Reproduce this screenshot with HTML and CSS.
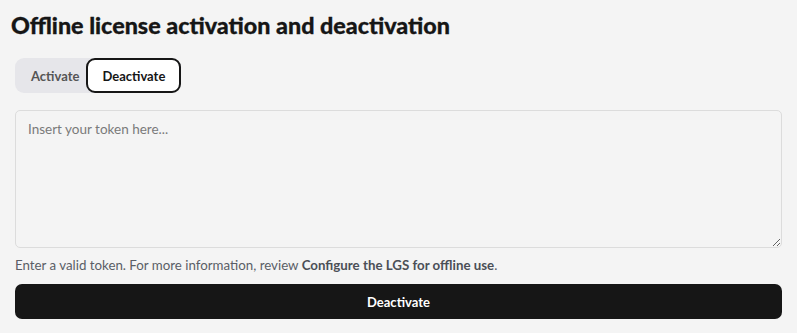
FILE: index.html
```html
<!DOCTYPE html>
<html>
<head>
<meta charset="utf-8">
<link rel="stylesheet" href="styles.css">
</head>
<body>
<main class="page">
  <h1 class="title">Offline license activation and deactivation</h1>
  <div class="tabs">
    <button class="tab">Activate</button>
    <button class="tab tab-active">Deactivate</button>
  </div>
  <textarea class="token" placeholder="Insert your token here..."></textarea>
  <p class="help">Enter a valid token. For more information, review <a class="link" href="#">Configure the LGS for offline use</a>.</p>
  <button class="submit">Deactivate</button>
</main>
</body>
</html>
```
FILE: styles.css
```css
* { box-sizing: border-box; }
html, body { margin: 0; padding: 0; background: #f4f4f4; }
body { font-family: "Lato", "Noto Sans", sans-serif; color: #161616; }
.page { padding: 10px 15px 0 15px; display: flex; flex-direction: column; }
.title { margin: 0 0 0 -4px; font-size: 23.3px; font-weight: 900; line-height: 30px; letter-spacing: 0; color: #161616; -webkit-text-stroke: 0.3px #161616; }
.tabs { display: flex; align-self: flex-start; margin-top: 18px; background: #e6e6ea; border-radius: 9px; height: 35px; }
.tab { font-family: inherit; font-size: 13px; font-weight: 700; border: none; background: transparent; color: #555; padding: 0 7px 0 16px; border-radius: 9px; cursor: pointer; }
.tab-active { background: #fff; color: #161616; border: 2px solid #161616; padding: 0 14px; }
.token { margin-top: 17px; height: 138px; width: 100%; resize: vertical; background: #f4f4f4; border: 1px solid #dcdcdc; border-radius: 5px; padding: 10px 12px; font-family: inherit; font-size: 13.5px; color: #161616; }
.token::placeholder { color: #7a7a7a; }
.help { margin: 8px 0 0 0; font-size: 13.3px; color: #5a5e66; line-height: 18px; }
.link { color: #4b4f57; font-weight: 700; text-decoration: none; }
.submit { margin-top: 10px; height: 35px; width: 100%; background: #161616; color: #fff; border: none; border-radius: 7px; font-family: inherit; font-size: 13px; font-weight: 700; }
```
